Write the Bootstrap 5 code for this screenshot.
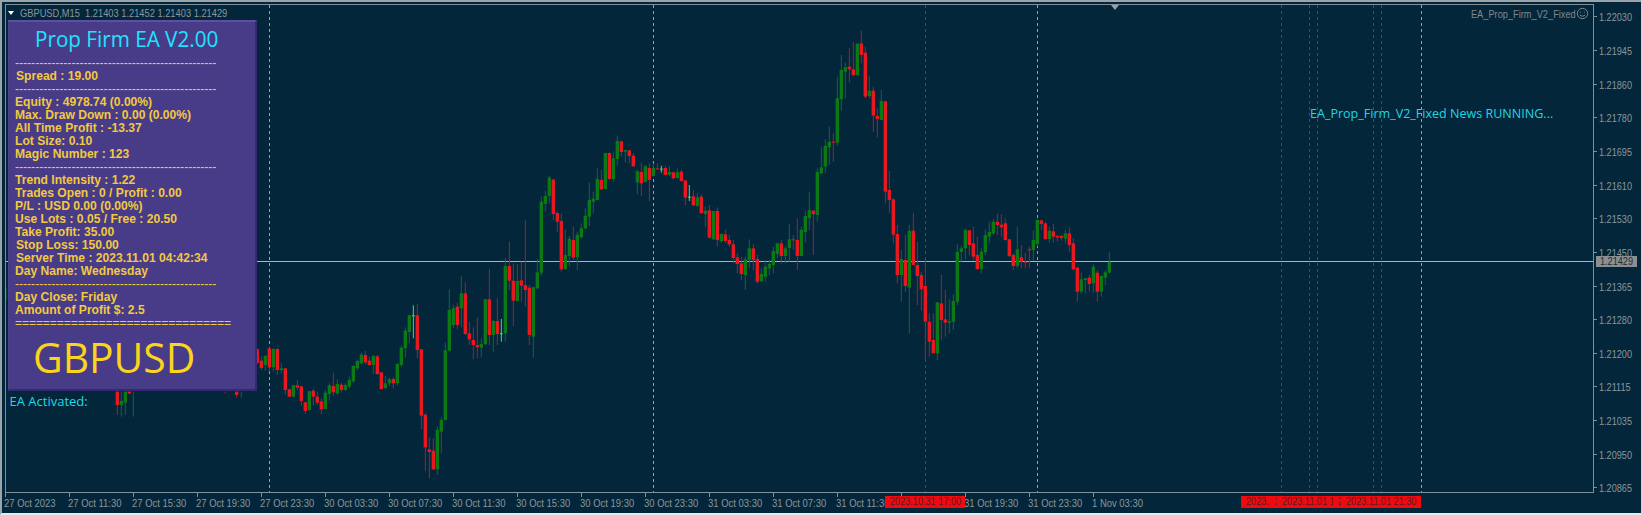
<!DOCTYPE html>
<html lang="en">
<head>
<meta charset="utf-8">
<title>GBPUSD,M15</title>
<link href="https://cdn.jsdelivr.net/npm/bootstrap@5.3.0/dist/css/bootstrap.min.css" rel="stylesheet">
<style>
html,body{margin:0;height:515px;overflow:hidden;background:#03263a}
.mt-window{width:1641px;height:515px;background:#03263a;border-top:2px solid #9aa5ab;border-left:2px solid #9aa5ab;border-bottom:2px solid #dfeef2;padding:2px 0 0 3px;font-family:"Liberation Sans",sans-serif;color:#8b979d;font-size:11px;box-sizing:border-box}
.plot-row{height:489px}
.plot{width:1589px;height:489px;border:1px solid #7f8e97;flex:none;position:relative}
.plot svg.chart-svg{position:absolute;left:0;top:0}
.price-axis{width:45px;padding-top:6.4px;flex:none;position:relative}
.price-item{height:33.65px;line-height:14px;padding-left:5px;position:relative;white-space:nowrap}
.price-item::before{content:"";position:absolute;left:0;top:6px;width:3px;height:1px;background:#7f8e97}
.price-item span,.price-now span{display:inline-block;transform:scaleX(.83);transform-origin:left}
.price-now{position:absolute;left:2px;top:251.5px;width:41px;height:11px;line-height:11px;background:#8b8f91;color:#1d2c35;padding-left:4px;white-space:nowrap}
.time-axis{position:relative;height:20px}
.time-item{width:64px;flex:none;line-height:13px;padding-top:4px;position:relative;white-space:nowrap}
.time-item::before{content:"";position:absolute;left:0;top:0;width:1px;height:4px;background:#7f8e97}
.time-item span{position:relative;left:-1px;display:inline-block;transform:scaleX(.86);transform-origin:left}
.red-label{position:absolute;top:3px;height:11.5px;width:80px;line-height:11.5px;background:#f00a0f;color:#5c1a26;padding-left:5px;white-space:nowrap;overflow:hidden}
.red-label span{display:inline-block;transform:scaleX(.83);transform-origin:left}
.chart-title{position:absolute;left:14px;top:1px;font-size:11px;line-height:14px;white-space:pre;color:#8b979d;transform:scaleX(.845);transform-origin:left}
.title-caret{position:absolute;left:2px;top:6px;width:0;height:0;border-left:3.5px solid transparent;border-right:3.5px solid transparent;border-top:4px solid #fff}
.shift-caret{position:absolute;left:1105px;top:0;width:0;height:0;border-left:4.5px solid transparent;border-right:4.5px solid transparent;border-top:5px solid #8fa3ad}
.ea-name{position:absolute;right:17px;top:2px;line-height:14px;font-size:11px;color:#7d8a91;transform:scaleX(.84);transform-origin:right;white-space:nowrap}
.smile{position:absolute;left:1570px;top:2px}
.run-msg{position:absolute;left:1304px;top:101px;font-family:"Open Sans","Liberation Sans",sans-serif;font-size:12.55px;line-height:16px;color:#1fd8e6;white-space:nowrap}
.ea-active{position:absolute;left:3.5px;top:387.5px;font-family:"Open Sans","Liberation Sans",sans-serif;font-size:13px;line-height:16px;color:#1fd8e6;white-space:nowrap}
.info-panel{position:absolute;left:2px;top:15px;width:249px;height:371px;background:#483c88;border-top:2px solid #5b50a6;border-right:2px solid #352a72;border-bottom:2px solid #352a72;border-left:1px solid #4d4290;padding:0 0 0 6px;font-family:"Liberation Sans",Arial,sans-serif;font-weight:700;font-size:12.1px;color:#f2c93f;overflow:hidden;box-sizing:border-box}
.panel-head{font-family:"Open Sans","Liberation Sans",sans-serif;font-weight:400;font-size:22.6px;line-height:30px;height:34.6px;padding:2px 0 0 20px;color:#1fe4ff;white-space:nowrap;transform:scaleX(.915);transform-origin:20px 0}
.ln{height:13px;line-height:13px;white-space:nowrap}
.rule{font-weight:400}
.rule-eq{letter-spacing:-.1px}
.in1{padding-left:1px}
.pair{font-family:"Open Sans","Liberation Sans",sans-serif;font-weight:400;font-size:42.5px;line-height:48px;color:#fbd41b;padding:3.4px 0 0 18px;white-space:nowrap;transform:scaleX(.96);transform-origin:18px 0}
</style>
</head>
<body>
<div class="mt-window">
  <div class="plot-row d-flex">
    <div class="plot">
      <svg id="chart" class="chart-svg" width="1587" height="487" viewBox="6 5 1587 487" aria-label="GBPUSD candlestick chart"></svg>
      <span class="title-caret"></span>
      <span class="chart-title">GBPUSD,M15  1.21403 1.21452 1.21403 1.21429</span>
      <span class="shift-caret"></span>
      <span class="ea-name">EA_Prop_Firm_V2_Fixed</span>
      <svg class="smile" width="13" height="13" viewBox="0 0 13 13" fill="none" stroke="#7d8a91" stroke-width="1"><circle cx="6.5" cy="6.5" r="5.2"/><circle cx="4.6" cy="5" r=".6" fill="#7d8a91" stroke="none"/><circle cx="8.4" cy="5" r=".6" fill="#7d8a91" stroke="none"/><path d="M3.8 7.8c1.4 1.8 4 1.8 5.4 0"/></svg>
      <div class="run-msg">EA_Prop_Firm_V2_Fixed News RUNNING...</div>
      <div class="ea-active">EA Activated:</div>
      <div class="info-panel">
        <div class="panel-head">Prop Firm EA V2.00</div>
        <div class="ln rule">--------------------------------------------------</div>
        <div class="ln in1">Spread : 19.00</div>
        <div class="ln rule">--------------------------------------------------</div>
        <div class="ln">Equity : 4978.74 (0.00%)</div>
        <div class="ln">Max. Draw Down : 0.00 (0.00%)</div>
        <div class="ln">All Time Profit : -13.37</div>
        <div class="ln">Lot Size: 0.10</div>
        <div class="ln">Magic Number : 123</div>
        <div class="ln rule">--------------------------------------------------</div>
        <div class="ln">Trend Intensity : 1.22</div>
        <div class="ln">Trades Open : 0 / Profit : 0.00</div>
        <div class="ln">P/L : USD 0.00 (0.00%)</div>
        <div class="ln">Use Lots : 0.05 / Free : 20.50</div>
        <div class="ln">Take Profit: 35.00</div>
        <div class="ln in1">Stop Loss: 150.00</div>
        <div class="ln in1">Server Time : 2023.11.01 04:42:34</div>
        <div class="ln">Day Name: Wednesday</div>
        <div class="ln rule">--------------------------------------------------</div>
        <div class="ln">Day Close: Friday</div>
        <div class="ln">Amount of Profit $: 2.5</div>
        <div class="ln rule rule-eq">===============================</div>
        <div class="pair">GBPUSD</div>
      </div>
    </div>
    <div class="price-axis">
      <div class="price-item"><span>1.22030</span></div>
      <div class="price-item"><span>1.21945</span></div>
      <div class="price-item"><span>1.21860</span></div>
      <div class="price-item"><span>1.21780</span></div>
      <div class="price-item"><span>1.21695</span></div>
      <div class="price-item"><span>1.21610</span></div>
      <div class="price-item"><span>1.21530</span></div>
      <div class="price-item"><span>1.21450</span></div>
      <div class="price-item"><span>1.21365</span></div>
      <div class="price-item"><span>1.21280</span></div>
      <div class="price-item"><span>1.21200</span></div>
      <div class="price-item"><span>1.21115</span></div>
      <div class="price-item"><span>1.21035</span></div>
      <div class="price-item"><span>1.20950</span></div>
      <div class="price-item"><span>1.20865</span></div>
      <div class="price-now"><span>1.21429</span></div>
    </div>
  </div>
  <div class="time-axis d-flex">
    <div class="time-item"><span>27 Oct 2023</span></div>
    <div class="time-item"><span>27 Oct 11:30</span></div>
    <div class="time-item"><span>27 Oct 15:30</span></div>
    <div class="time-item"><span>27 Oct 19:30</span></div>
    <div class="time-item"><span>27 Oct 23:30</span></div>
    <div class="time-item"><span>30 Oct 03:30</span></div>
    <div class="time-item"><span>30 Oct 07:30</span></div>
    <div class="time-item"><span>30 Oct 11:30</span></div>
    <div class="time-item"><span>30 Oct 15:30</span></div>
    <div class="time-item"><span>30 Oct 19:30</span></div>
    <div class="time-item"><span>30 Oct 23:30</span></div>
    <div class="time-item"><span>31 Oct 03:30</span></div>
    <div class="time-item"><span>31 Oct 07:30</span></div>
    <div class="time-item"><span>31 Oct 11:30</span></div>
    <div class="time-item"><span>31 Oct 15:30</span></div>
    <div class="time-item"><span>31 Oct 19:30</span></div>
    <div class="time-item"><span>31 Oct 23:30</span></div>
    <div class="time-item"><span>1 Nov 03:30</span></div>
    <div class="red-label" style="left:880px"><span>2023.10.31 17:00</span></div>
    <div class="red-label" style="left:1236px"><span>2023.11.01 15:00</span></div>
    <div class="red-label" style="left:1265px"><span>2023.11.01 17:00</span></div>
    <div class="red-label" style="left:1272px"><span>2023.11.01 17:30</span></div>
    <div class="red-label" style="left:1328px"><span>2023.11.01 21:00</span></div>
    <div class="red-label" style="left:1336px"><span>2023.11.01 21:30</span></div>
  </div>
</div>
<script src="https://cdn.jsdelivr.net/npm/bootstrap@5.3.0/dist/js/bootstrap.bundle.min.js"></script>
<script>
// [type, centre-x, high, top, bottom, low] in 3x crop coordinates, converted to page pixels below
var z0=[["g",18,55,55,55,90]];
var z1=[["r",52,20,20,60,90],["g",64,20,48,60,95],["g",76,20,20,53,90],["r",88,20,20,26,26],["g",100,20,20,20,95],["r",375,20,20,20,25],["r",410,20,20,30,38],["g",424,20,20,20,38]];
var z7=[["r",112,325,328,368,372],["r",124,350,362,384,390],["g",136,345,348,375,392],["r",148,322,325,382,395],["g",160,325,327,382,395],["r",172,325,327,390,405],["g",184,370,385,390,400],["r",196,384,385,450,463],["r",208,447,448,470,472],["g",220,435,436,470,472],["r",232,420,436,443,450],["r",244,438,439,483,497],["r",256,485,487,513,522],["g",268,453,454,510,512],["r",280,447,452,470,495],["r",292,455,470,488,495],["r",304,475,484,508,522],["g",316,450,458,507,508],["g",328,430,436,462,482],["r",340,398,438,457,468],["g",352,418,432,460,465],["r",364,428,434,450,458],["g",376,430,435,450,452],["g",388,410,420,440,445],["g",400,375,378,424,428],["g",412,360,363,385,390],["g",424,338,344,370,372],["r",436,333,345,367,372],["r",448,350,362,375,378],["g",460,345,348,375,402],["r",472,345,349,402,405],["r",484,396,397,447,449],["g",496,408,430,444,448],["g",508,412,418,430,438],["r",520,412,417,430,445],["g",532,368,372,430,436],["g",544,317,323,375,380],["g",556,262,272,325,352],["g",568,225,226,276,310],["l",580,196,226,228,295],["r",592,193,226,330,355],["r",604,327,328,527,567],["r",616,520,524,622,692],["r",628,592,628,636,715],["r",640,595,632,688,690],["g",652,560,570,688,705],["g",664,532,540,575,640],["g",676,308,331,540,541],["g",688,148,210,332,335],["g",700,195,205,255,265],["r",712,188,200,255,268],["g",724,108,160,205,262],["r",736,127,160,282,285],["r",748,245,280,298,315],["r",760,262,300,315,358],["r",772,232,315,322,355],["g",784,295,312,323,352],["g",796,177,178,312,315],["r",808,86,178,285,315],["g",820,240,243,285,335],["r",832,175,243,282,315],["l",844,237,280,282,305],["g",856,55,78,280,305],["r",868,5,78,122,150],["r",880,70,122,182,258],["g",892,72,123,183,185],["r",904,65,121,137,185],["r",916,-60,135,150,200],["r",928,135,143,285,315],["g",940,140,142,290,353],["g",952,58,97,145,148]];
var z8=[["g",424,290,305,518,527],["g",436,272,288,312,335],["g",448,228,233,288,310],["r",460,237,239,342,360],["r",472,335,339,365,395],["r",484,340,363,508,515],["g",496,388,465,507,510],["g",508,408,416,468,500],["r",520,380,420,473,480],["g",532,395,404,472,510],["g",544,370,385,412,415],["g",556,325,347,385,388],["g",568,248,300,350,378],["g",580,275,296,305,340],["g",592,205,237,300,300],["r",604,210,240,268,270],["g",616,158,159,267,268],["r",628,158,159,237,240],["g",640,160,175,237,245],["g",652,108,123,177,197],["r",664,123,124,156,170],["g",676,150,150,155,187],["r",688,150,151,168,190],["r",700,160,167,199,200],["g",712,210,214,247,283],["r",724,188,216,250,288],["g",736,195,199,246,247],["r",748,190,204,240,303],["g",760,190,204,228,230],["r",772,190,205,207,210],["l",784,197,206,208,218],["r",796,197,204,225,226],["g",808,198,216,224,228],["r",820,215,217,235,238],["g",832,205,217,234,236],["r",844,210,215,243,245],["r",856,240,241,293,315],["l",868,255,290,292,303],["r",880,270,289,316,318],["g",892,280,292,318,320],["r",904,283,290,339,342],["g",916,320,332,342,382],["r",928,315,331,413,416],["g",940,332,333,418,420],["r",952,322,333,420,440],["g",964,400,402,424,428],["r",976,388,403,423,430],["r",988,405,420,433,440],["r",1000,420,433,474,490],["r",1012,460,472,492,520],["r",1024,470,490,522,540],["g",1036,470,478,525,570],["g",1048,418,445,480,505],["r",1060,433,445,480,510],["r",1072,465,477,545,550],["g",1084,505,522,544,545],["g",1096,480,500,530,545],["g",1108,480,492,505,525],["g",1120,440,453,495,520],["g",1132,428,430,462,475],["r",1144,420,430,468,490],["g",1156,438,445,468,490],["g",1168,372,418,444,485],["r",1180,405,418,420,450]];
var z9=[["r",142,595,660,708,750],["g",154,620,630,708,708],["g",166,572,588,636,668],["g",178,515,570,595,630],["r",190,570,572,582,705],["g",202,445,456,585,605],["g",214,380,442,460,462],["g",226,358,378,440,458],["g",238,320,365,382,435],["r",250,340,365,368,425],["g",262,170,235,368,378],["g",274,105,150,238,272],["g",286,128,142,155,235],["r",298,85,140,148,188],["r",310,65,148,165,170],["g",322,70,71,165,168],["r",334,32,70,105,130],["r",346,80,98,230,235],["g",358,168,212,228,235],["r",370,200,212,287,335],["r",382,265,288,297,352],["g",394,210,243,300,300],["r",406,243,244,515,550],["r",418,453,510,540,578],["r",430,535,538,644,670],["r",442,615,642,765,790],["g",454,690,717,765,845],["r",466,645,720,798,815],["g",478,615,632,803,940],["r",490,578,632,735,735],["r",502,665,735,768,855],["r",514,755,765,808,872],["r",526,720,798,905,1020],["r",538,880,905,965,1010],["r",550,880,960,1000,1000],["g",562,845,847,1000,1020],["r",574,765,850,900,960],["r",586,810,898,908,950],["g",598,838,903,908,940],["g",610,822,843,905,930],["g",622,672,696,845,855],["g",634,678,685,696,725],["g",646,625,630,685,718],["r",658,630,631,675,706],["r",670,620,670,710,722],["r",682,650,705,747,750],["g",694,685,695,747,760],["g",706,628,645,697,705],["g",718,605,636,650,670],["g",730,597,605,640,645],["r",742,580,605,615,645],["r",754,582,614,622,650],["r",766,595,610,660,662],["r",778,657,658,708,712],["r",790,700,705,738,750],["g",802,620,688,738,745],["r",814,675,712,725,745],["r",826,698,725,728,745],["r",838,680,688,690,745],["g",850,630,660,690,722],["g",862,598,600,672,680],["r",874,600,601,612,630],["r",886,605,610,657,660],["g",898,620,632,657,668],["r",910,612,634,650,668],["r",922,645,648,652,665],["r",934,645,648,654,662],["g",946,630,640,656,670],["r",958,622,640,675,695],["r",970,655,670,748,752],["r",982,740,743,815,845],["g",994,758,778,815,822],["g",1006,775,775,780,820],["r",1018,765,773,792,815],["g",1030,733,740,790,818],["r",1042,750,758,815,845],["g",1054,765,768,815,830],["g",1066,750,757,773,795],["g",1078,695,726,758,760]];
var svg=document.getElementById("chart"),out=[];
function rect(x,y,w,h,f){out.push('<rect x="'+x.toFixed(2)+'" y="'+y.toFixed(2)+'" width="'+w+'" height="'+Math.max(h,1).toFixed(2)+'" fill="'+f+'"/>');}
function vline(x,c){out.push('<line x1="'+x+'" x2="'+x+'" y1="5" y2="492" stroke="'+c+'" stroke-dasharray="3 3"/>');}
[269.5,653.5,1037.5,1421.5].forEach(function(x){vline(x,"#94a3ab");});
[925.5,1281.5,1309.5,1317.5,1373.5,1381.5].forEach(function(x){vline(x,"#a8202e");});
out.push('<line x1="6" x2="1593" y1="261.5" y2="261.5" stroke="#a7b5bd"/>');
var C={r:["#e81820","#a0202c"],g:["#0b7a16","#12682a"],l:["#3fe064","#3fe064"]};
function add(d,x0,y0){d.forEach(function(c){var x=x0+c[1]/3,t=c[0];
 rect(x-.5,y0+c[2]/3,1,(c[5]-c[2])/3,C[t][1]);
 if(c[4]<=c[3]){return;}
 if(t==="l"){rect(x-1.5,y0+c[3]/3,3,1,C.l[0]);}else{rect(x-1.7,y0+c[3]/3,3.4,(c[4]-c[3])/3,C[t][0]);}
});}
add(z0,0,270);add(z1,100,385);add(z7,220,240);add(z8,400,100);add(z9,750,20);
svg.innerHTML=out.join("");
</script>
</body>
</html>
